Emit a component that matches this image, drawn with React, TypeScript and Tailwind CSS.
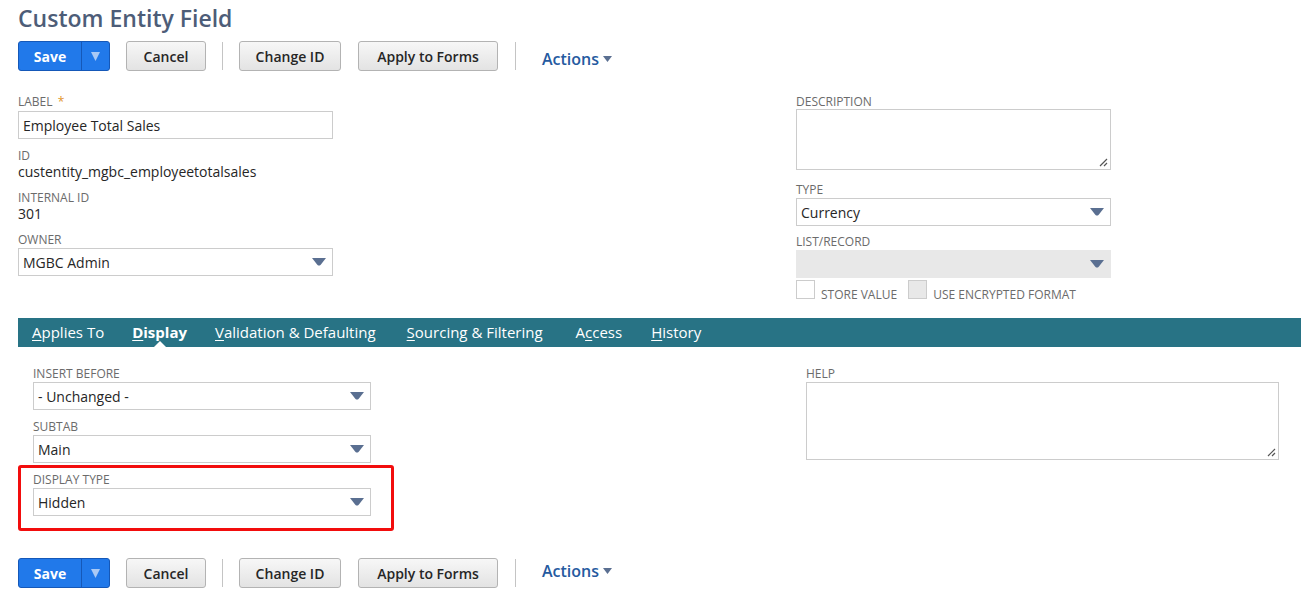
import React from "react";

const FONT = { fontFamily: '"Open Sans", "Liberation Sans", sans-serif' };

function Caret({ className = "" }: { className?: string }) {
  return (
    <svg width="14" height="8" viewBox="0 0 14 8" className={className}>
      <path d="M0 0 H14 L8.5 7 Q7 8.2 5.5 7 Z" fill="#5a6f91" />
    </svg>
  );
}

function Grip() {
  return (
    <svg width="10" height="10" viewBox="0 0 10 10" className="absolute bottom-[2px] right-[2px]">
      <path d="M9 2 L2 9 M9 6 L6 9" stroke="#555" strokeWidth="1.2" />
    </svg>
  );
}

function Label({ children }: { children: React.ReactNode }) {
  return <div className="text-[12px] uppercase leading-[16px] text-[#6b6b6b]">{children}</div>;
}

function Select({ value, w, disabled }: { value: string; w: string; disabled?: boolean }) {
  return (
    <div
      className={`${w} flex h-[28px] items-center justify-between border pl-[4px] pr-[6px] text-[14px] text-[#262626] ${
        disabled ? "border-[#e8e8e8] bg-[#e8e8e8]" : "border-[#cccccc] bg-white"
      }`}
    >
      <span>{value}</span>
      <Caret />
    </div>
  );
}

function Toolbar({ actionsShift }: { actionsShift: string }) {
  const btn =
    "h-[30px] rounded-[3px] border border-[#b3b3b3] bg-gradient-to-b from-[#f7f7f7] to-[#e3e3e3] px-[14px] text-[14px] font-semibold text-[#262626]";
  return (
    <div className="flex items-center">
      <div className="flex h-[30px] overflow-hidden rounded-[3px] border border-[#1558b8] bg-[#2179ea]">
        <div className="flex w-[62px] items-center justify-center text-[14px] font-bold text-white">Save</div>
        <div className="flex w-[28px] items-center justify-center border-l border-[#1558b8]">
          <svg width="9" height="9" viewBox="0 0 9 9">
            <path d="M0 0 H9 L4.5 9 Z" fill="#a9c9f5" />
          </svg>
        </div>
      </div>
      <button className={`${btn} ml-[16px] w-[80px]`}>Cancel</button>
      <div className="mx-[16px] h-[28px] w-px bg-[#c4c4c4]" />
      <button className={`${btn} w-[102px]`}>Change ID</button>
      <button className={`${btn} ml-[17px] w-[140px]`}>Apply to Forms</button>
      <div className="ml-[17px] h-[28px] w-px bg-[#c4c4c4]" />
      <div className={`ml-[26px] flex items-center gap-[4px] text-[16px] font-semibold text-[#255a9f] ${actionsShift}`}>
        Actions
        <svg width="9" height="6" viewBox="0 0 9 6">
          <path d="M0 0 H9 L4.5 6 Z" fill="#5a6f91" />
        </svg>
      </div>
    </div>
  );
}

const TABS = [
  { first: "A", rest: "pplies To", ml: "" },
  { first: "D", rest: "isplay", active: true, ml: "ml-[28px]" },
  { first: "V", rest: "alidation & Defaulting", ml: "ml-[28px]" },
  { first: "S", rest: "ourcing & Filtering", ml: "ml-[31px]" },
  { first: "A", rest: "ccess", mid: true, ml: "ml-[33px]" },
  { first: "H", rest: "istory", ml: "ml-[29px]" },
];

export default function App() {
  return (
    <div className="h-[605px] w-[1301px] overflow-hidden bg-white" style={FONT}>
      <div className="pl-[18px] pt-[2px]">
        <h1 className="text-[23px] font-semibold leading-[32px] text-[#4d5d78]">Custom Entity Field</h1>
        <div className="mt-[7px]">
          <Toolbar actionsShift="mt-[6px]" />
        </div>
      </div>

      <div className="mt-[23px] flex pl-[18px]">
        <div className="w-[778px]">
          <Label>
            Label <span className="ml-[2px] text-[#e2952d]">*</span>
          </Label>
          <div className="mt-[1px] flex h-[28px] w-[315px] items-center border border-[#cccccc] pl-[4px] text-[14px] text-[#262626]">
            Employee Total Sales
          </div>
          <div className="mt-[9px]">
            <Label>ID</Label>
            <div className="text-[14px] leading-[16px] text-[#262626]">custentity_mgbc_employeetotalsales</div>
          </div>
          <div className="mt-[10px]">
            <Label>Internal ID</Label>
            <div className="text-[14px] leading-[16px] text-[#262626]">301</div>
          </div>
          <div className="mt-[10px]">
            <Label>Owner</Label>
            <Select value="MGBC Admin" w="w-[315px]" />
          </div>
        </div>
        <div>
          <Label>Description</Label>
          <div className="relative -mt-[1px] h-[61px] w-[315px] border border-[#cccccc]">
            <Grip />
          </div>
          <div className="mt-[12px]">
            <Label>Type</Label>
            <Select value="Currency" w="w-[315px]" />
          </div>
          <div className="mt-[8px]">
            <Label>List/Record</Label>
            <Select value="" w="w-[315px]" disabled />
          </div>
          <div className="mt-[2px] flex h-[19px] items-start text-[12px] uppercase leading-[16px] text-[#6b6b6b]">
            <div className="h-[19px] w-[19px] border border-[#cccccc] bg-white" />
            <span className="ml-[6px] mt-[7px]">Store Value</span>
            <div className="ml-[11px] h-[19px] w-[19px] border border-[#cccccc] bg-[#e8e8e8]" />
            <span className="ml-[6px] mt-[7px]">Use Encrypted Format</span>
          </div>
        </div>
      </div>

      <div className="ml-[18px] mt-[19px] flex h-[29px] items-center bg-[#287385] pl-[14px] text-[15px] text-white">
        {TABS.map((t, i) => (
          <div key={i} className={`relative flex h-full items-center ${t.ml} ${t.active ? "font-bold" : ""}`}>
            {t.mid ? (
              <span>
                A<span className="underline underline-offset-2">c</span>cess
              </span>
            ) : (
              <span>
                <span className="underline underline-offset-2">{t.first}</span>
                {t.rest}
              </span>
            )}
            {t.active && (
              <svg width="12" height="6" viewBox="0 0 12 6" className="absolute bottom-0 left-1/2 -translate-x-1/2">
                <path d="M0 6 L6 0 L12 6 Z" fill="#ffffff" />
              </svg>
            )}
          </div>
        ))}
      </div>

      <div className="mt-[19px] flex pl-[18px]">
        <div className="w-[788px]">
          <div className="pl-[15px]">
            <Label>Insert Before</Label>
            <Select value="- Unchanged -" w="w-[338px]" />
          </div>
          <div className="mt-[9px] pl-[15px]">
            <Label>Subtab</Label>
            <Select value="Main" w="w-[338px]" />
          </div>
          <div className="mt-[2px] w-[376px] rounded-[3px] border-[3px] border-[#f20d0d] pb-[12px] pl-[12px] pt-[4px]">
            <Label>Display Type</Label>
            <Select value="Hidden" w="w-[338px]" />
          </div>
        </div>
        <div>
          <Label>Help</Label>
          <div className="relative h-[78px] w-[473px] border border-[#cccccc]">
            <Grip />
          </div>
        </div>
      </div>

      <div className="mt-[27px] pl-[18px]">
        <Toolbar actionsShift="-mt-[4px]" />
      </div>
    </div>
  );
}
